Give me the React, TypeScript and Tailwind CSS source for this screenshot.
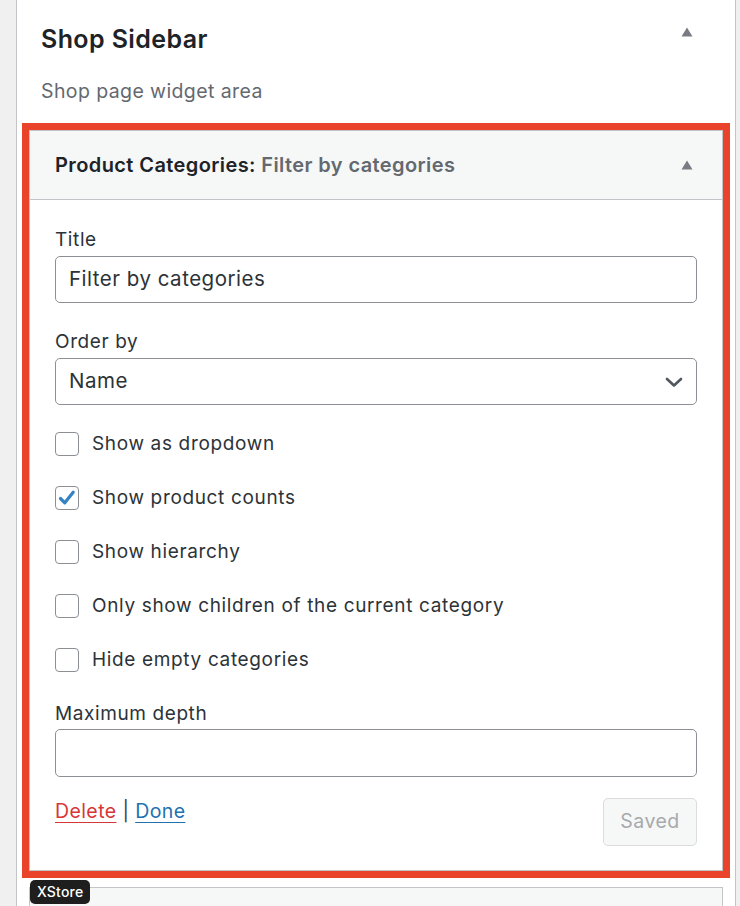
import React from "react";

const Triangle = () => (
  <svg width="12" height="10" viewBox="0 0 12 10" className="shrink-0">
    <path d="M6 0.5 L11.5 9.5 L0.5 9.5 Z" fill="#787c82" />
  </svg>
);

function Checkbox({ label, checked }: { label: string; checked?: boolean }) {
  return (
    <label className="flex items-center gap-[13px] h-6">
      <span className="w-6 h-6 rounded-[4px] border border-[#8c8f94] bg-white flex items-center justify-center shrink-0">
        {checked && (
          <svg width="20" height="20" viewBox="0 0 20 20">
            <path
              d="M3.5 10.5 L7.8 14.8 L16.2 4.2"
              fill="none"
              stroke="#3582c4"
              strokeWidth="3.2"
              strokeLinecap="round"
              strokeLinejoin="round"
            />
          </svg>
        )}
      </span>
      <span className="text-[19px] tracking-[0.65px] text-[#2c3338]">{label}</span>
    </label>
  );
}

export default function App() {
  const options = [
    { label: "Show as dropdown" },
    { label: "Show product counts", checked: true },
    { label: "Show hierarchy" },
    { label: "Only show children of the current category" },
    { label: "Hide empty categories" },
  ];

  return (
    <div className="flex h-[906px] overflow-hidden bg-[#f0f0f1] font-['Inter','Noto_Sans',sans-serif]">
      <div className="w-4 shrink-0" />
      <div className="w-[720px] shrink-0 bg-white border-x border-[#c3c4c7]">
        {/* sidebar heading */}
        <div className="flex items-start justify-between pl-6 pr-[42px] pt-[23px]">
          <h2 className="text-[25px] leading-8 font-semibold tracking-[0.4px] text-[#1d2327]">Shop Sidebar</h2>
          <div className="pt-[4px]">
            <Triangle />
          </div>
        </div>
        <p className="pl-6 mt-[24px] text-[19.5px] leading-6 tracking-[0.4px] text-[#646970]">
          Shop page widget area
        </p>

        <div className="relative px-3 mt-[27px] flex flex-col gap-4">
          {/* active widget */}
          <div className="border border-[#c3c4c7] outline-[7px] outline-solid outline-[#e9432b] bg-white">
            <div className="h-[69px] bg-[#f6f7f7] border-b border-[#c3c4c7] flex items-center justify-between pl-[25px] pr-[29px]">
              <h3 className="text-[20px] font-semibold tracking-[0.4px] text-[#1d2327]">
                Product Categories:{" "}
                <span className="text-[#646970]">Filter by categories</span>
              </h3>
              <Triangle />
            </div>

            <div className="px-[25px] pt-[28px] pb-6 tracking-[0.6px]">
              <div className="text-[19px] leading-6 text-[#2c3338]">Title</div>
              <div className="mt-1 h-[47px] rounded-[5px] border border-[#8c8f94] flex items-center px-[13px] text-[20.5px] tracking-[0.5px] text-[#2c3338]">
                Filter by categories
              </div>

              <div className="mt-[27px] text-[19px] leading-6 text-[#2c3338]">Order by</div>
              <div className="mt-1 h-[47px] rounded-[5px] border border-[#8c8f94] flex items-center justify-between pl-[13px] pr-[12px] text-[20.5px] tracking-[0.5px] text-[#2c3338]">
                <span>Name</span>
                <svg width="20" height="14" viewBox="0 0 20 14">
                  <path
                    d="M3 4 L10 10.5 L17 4"
                    fill="none"
                    stroke="#50575e"
                    strokeWidth="2.6"
                    strokeLinecap="round"
                    strokeLinejoin="round"
                  />
                </svg>
              </div>

              <div className="mt-[27px] flex flex-col gap-[30px]">
                {options.map((o) => (
                  <Checkbox key={o.label} label={o.label} checked={o.checked} />
                ))}
              </div>

              <div className="mt-[30px] text-[19px] leading-6 text-[#2c3338]">Maximum depth</div>
              <div className="mt-[3px] h-[48px] rounded-[5px] border border-[#8c8f94]" />

              <div className="mt-[21px] flex items-start justify-between">
                <div className="pt-px text-[19.5px] leading-6 tracking-[0.4px] text-[#3c434a]">
                  <a className="text-[#d63638] underline underline-offset-[4px]">Delete</a>
                  {" | "}
                  <a className="text-[#2271b1] underline underline-offset-[4px]">Done</a>
                </div>
                <button className="h-[48px] w-[94px] rounded-[5px] border border-[#dcdcde] bg-[#f6f7f7] text-[19.5px] tracking-[0.5px] text-[#a7aaad]">
                  Saved
                </button>
              </div>
            </div>
          </div>

          {/* next widget */}
          <div className="relative h-[60px] border border-[#c3c4c7] bg-[#f6f7f7]">
            <span className="absolute left-0 -top-[8px] h-6 px-[7px] rounded-[5px] bg-[#1e1e1e] text-white text-[14px] leading-6 font-medium tracking-[0.2px]">
              XStore
            </span>
          </div>
        </div>
      </div>
    </div>
  );
}
